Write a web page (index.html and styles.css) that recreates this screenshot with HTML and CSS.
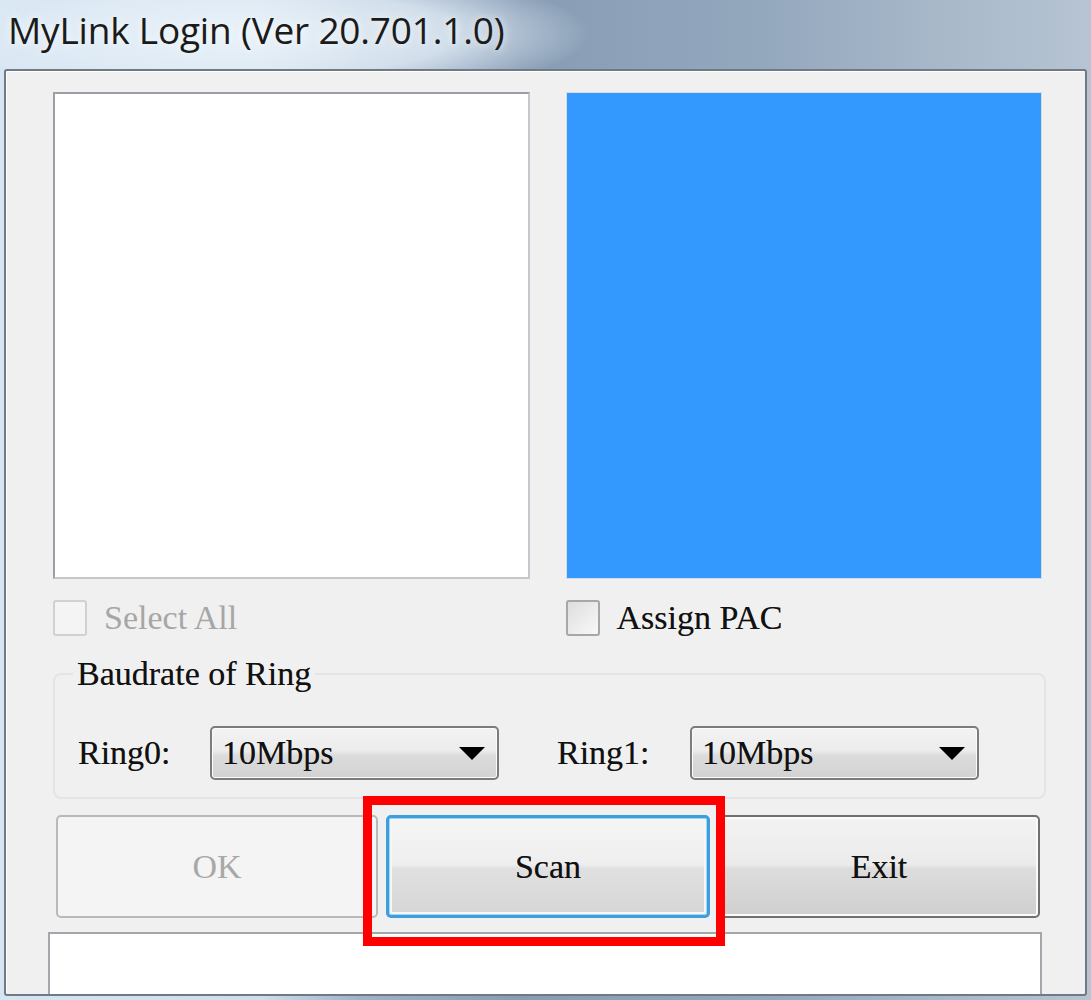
FILE: index.html
```html
<!DOCTYPE html>
<html>
<head>
<meta charset="utf-8">
<title>MyLink Login</title>
<link rel="stylesheet" href="styles.css">
</head>
<body>
<div class="screen">
  <div class="titlebar"><span class="title">MyLink Login (Ver 20.701.1.0)</span></div>
  <div class="window">
    <div class="lists">
      <div class="listbox"></div>
      <div class="bluebox"></div>
    </div>
    <div class="checks">
      <label class="check disabled"><span class="box"></span><span>Select All</span></label>
      <label class="check"><span class="box"></span><span>Assign PAC</span></label>
    </div>
    <fieldset class="group">
      <legend>Baudrate of Ring</legend>
      <div class="rings">
        <div class="ring ring0">
          <span class="ring-label">Ring0:</span>
          <div class="combo"><span>10Mbps</span><span class="arrow"></span></div>
        </div>
        <div class="ring ring1">
          <span class="ring-label">Ring1:</span>
          <div class="combo"><span>10Mbps</span><span class="arrow"></span></div>
        </div>
      </div>
    </fieldset>
    <div class="buttons">
      <div class="btn disabled">OK</div>
      <div class="btn focused">Scan</div>
      <div class="btn">Exit</div>
      <div class="highlight"></div>
    </div>
    <div class="statusbox"></div>
  </div>
</div>
</body>
</html>
```
FILE: styles.css
```css
html, body {
  margin: 0;
  padding: 0;
}
body {
  width: 1091px;
  height: 1000px;
  overflow: hidden;
  background: linear-gradient(90deg, #d6e5f3 0px, #cfdeec 260px, #9fb2c7 360px, #889db5 520px, #93a7bd 760px, #a9b9ca 950px, #b6c4d3 1091px);
}
.screen {
  position: relative;
  width: 1091px;
  height: 1000px;
}
.titlebar {
  height: 69px;
  box-sizing: border-box;
  padding-left: 8px;
  padding-top: 7px;
  background: radial-gradient(ellipse 340px 70px at 250px 34px, rgba(235,243,250,0.95) 0%, rgba(225,236,246,0.8) 60%, rgba(225,236,246,0) 100%);
}
.title {
  font-family: "Open Sans", "Noto Sans", sans-serif;
  font-size: 37px;
  letter-spacing: -0.2px;
  color: #1b1b1b;
  line-height: 46px;
  text-shadow: 0 0 8px rgba(255,255,255,0.9);
}
.window {
  position: relative;
  margin-left: 4px;
  width: 1083px;
  height: 927px;
  box-sizing: border-box;
  border: 2px solid #6f7a85;
  border-radius: 3px;
  background: #f0f0f0;
  box-shadow: inset 1px 1px 0 #ffffff;
  padding: 21px 43px 0 47px;
  overflow: hidden;
  font-family: "Liberation Serif", "Times New Roman", serif;
  font-size: 34px;
  color: #111111;
  text-shadow: 0 0 0.6px rgba(0,0,0,0.5);
}
.lists {
  display: flex;
  gap: 36px;
  height: 487px;
}
.listbox {
  width: 477px;
  box-sizing: border-box;
  border: 2px solid #9aa0a6;
  border-right-color: #c4c8cc;
  border-bottom-color: #c4c8cc;
  background: #ffffff;
}
.bluebox {
  width: 477px;
  box-sizing: border-box;
  border: 1px solid #d8dde2;
  background: #3399ff;
}
.checks {
  display: flex;
  gap: 36px;
  margin-top: 19px;
  height: 40px;
}
.check {
  width: 477px;
  display: flex;
  align-items: center;
  gap: 17px;
  line-height: 40px;
}
.box {
  width: 34px;
  height: 36px;
  box-sizing: border-box;
  border: 2px solid #a4a8ac;
  border-radius: 3px;
  background: linear-gradient(135deg, #dedede, #f8f8f8);
}
.check.disabled {
  color: #a6a6a6;
  text-shadow: none;
}
.check.disabled .box {
  border-color: #cfd1d3;
  background: #f4f4f4;
}
.group {
  margin: 18px 0 0 0;
  padding: 0;
  width: 993px;
  height: 143px;
  box-sizing: border-box;
  border: 2px solid #e2e5e8;
  border-radius: 8px;
}
.group legend {
  margin-left: 18px;
  padding: 0 4px;
  line-height: 36px;
}
.rings {
  display: flex;
  margin-top: 34px;
  padding-left: 23px;
}
.ring {
  display: flex;
  align-items: center;
}
.ring0 { width: 479px; }
.ring-label {
  width: 132px;
}
.ring1 .ring-label { width: 133px; }
.combo {
  width: 289px;
  height: 54px;
  box-sizing: border-box;
  border: 2px solid #7c7c7c;
  border-radius: 5px;
  background: linear-gradient(180deg, #f3f3f3 0%, #ececec 45%, #dcdcdc 55%, #d2d2d2 100%);
  box-shadow: inset 0 0 0 1px #fbfbfb;
  display: flex;
  align-items: center;
  justify-content: space-between;
  padding: 0 10px 0 10px;
}
.arrow {
  width: 0;
  height: 0;
  border-left: 13px solid transparent;
  border-right: 13px solid transparent;
  border-top: 13px solid #000000;
  margin-right: 2px;
}
.buttons {
  position: relative;
  display: flex;
  gap: 8px;
  margin: 16px 0 0 3px;
  width: 984px;
  height: 103px;
}
.btn {
  flex: 1;
  box-sizing: border-box;
  border: 2px solid #707070;
  border-radius: 5px;
  background: linear-gradient(180deg, #f3f3f3 0%, #ebebeb 48%, #dddddd 52%, #cfcfcf 100%);
  box-shadow: inset 0 0 0 2px #fafafa;
  display: flex;
  align-items: center;
  justify-content: center;
}
.btn.disabled {
  border-color: #b7babd;
  background: #f4f4f4;
  color: #a8a8a8;
  box-shadow: none;
  text-shadow: none;
}
.btn.focused {
  border: 3px solid #3c9fdc;
  box-shadow: inset 0 0 0 1px #9fd6f5, inset 0 0 0 3px #f6f6f6;
  background: linear-gradient(180deg, #f5f5f5 0%, #eeeeee 48%, #e0e0e0 52%, #d6d6d6 100%);
}
.highlight {
  position: absolute;
  left: 307px;
  top: -19px;
  width: 362px;
  height: 150px;
  box-sizing: border-box;
  border: 9px solid #ff0000;
  pointer-events: none;
}
.statusbox {
  margin: 14px 0 0 -5px;
  width: 994px;
  height: 80px;
  box-sizing: border-box;
  border: 2px solid #a3a7ab;
  border-bottom: none;
  background: #ffffff;
}
```
